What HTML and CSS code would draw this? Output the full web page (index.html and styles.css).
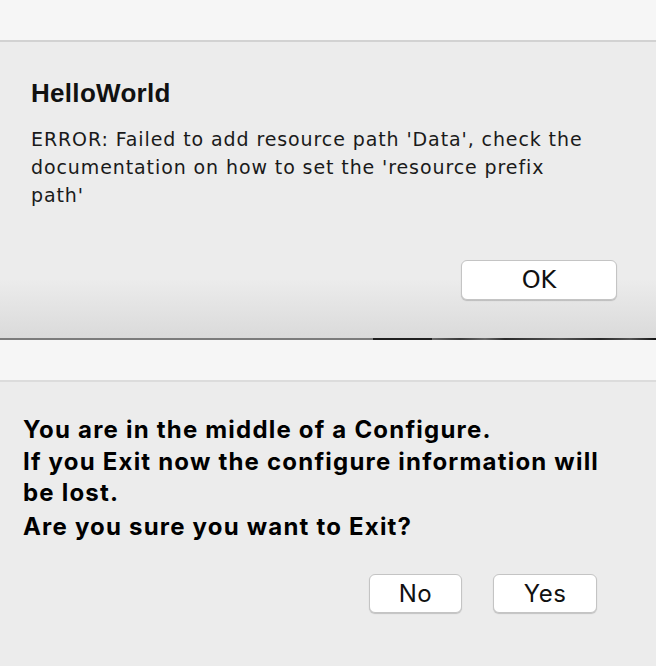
FILE: index.html
```html
<!DOCTYPE html>
<html>
<head>
<meta charset="utf-8">
<link rel="stylesheet" href="styles.css">
</head>
<body>
<section class="dialog dialog-error">
  <div class="titlebar"></div>
  <div class="dialog-body error-body">
    <h1 class="title">HelloWorld</h1>
    <p class="message">ERROR: Failed to add resource path 'Data', check the<br>documentation on how to set the 'resource prefix<br>path'</p>
    <div class="actions actions-ok">
      <button class="btn btn-ok">OK</button>
    </div>
  </div>
</section>
<div class="divider"></div>
<section class="dialog dialog-confirm">
  <div class="titlebar"></div>
  <div class="dialog-body confirm-body">
    <p class="question">You are in the middle of a Configure.<br>If you Exit now the configure information will<br>be lost.</p>
    <p class="question question-last">Are you sure you want to Exit?</p>
    <div class="actions actions-yn">
      <button class="btn btn-no">No</button>
      <button class="btn btn-yes">Yes</button>
    </div>
  </div>
</section>
</body>
</html>
```
FILE: styles.css
```css
* { box-sizing: border-box; }
html, body {
  margin: 0;
  padding: 0;
  width: 656px;
  height: 666px;
  overflow: hidden;
  background: #ececec;
}
.dialog { width: 656px; }
.titlebar {
  height: 42px;
  background: #f6f6f6;
  border-bottom: 2px solid #d2d2d2;
}
.dialog-confirm .titlebar {
  border-bottom-color: #dcdcdc;
}
.error-body {
  height: 296px;
  padding: 36px 39px 0 31px;
  background: linear-gradient(to bottom, #ececec 0%, #ececec 80%, #dadada 100%);
}
.title {
  margin: 0;
  font-family: "Liberation Sans", Arial, sans-serif;
  font-weight: 700;
  font-size: 26px;
  line-height: 30px;
  letter-spacing: 0.3px;
  color: #111;
}
.message {
  margin: 17px 0 0;
  font-family: "DejaVu Sans", sans-serif;
  font-size: 19px;
  line-height: 28px;
  letter-spacing: 0.9px;
  white-space: nowrap;
  color: #1a1a1a;
}
.actions {
  display: flex;
  justify-content: flex-end;
}
.actions-ok { margin-top: 51px; }
.btn {
  background: #fff;
  border: 1px solid #c4c4c4;
  border-radius: 6px;
  box-shadow: 0 1px 1px rgba(0,0,0,0.18);
  color: #111;
  padding: 0;
  height: 40px;
}
.btn-ok {
  width: 156px;
  font-family: "DejaVu Sans", sans-serif;
  font-size: 24px;
}
.divider {
  height: 2px;
  background: linear-gradient(to right, #7c7c7c 0, #7c7c7c 373px, #1f1f1f 373px, #1f1f1f 432px, #6a6a6a 432px, #3a3a3a 460px, #6a6a6a 485px, #2a2a2a 505px, #555 560px, #2a2a2a 600px, #555 630px, #111 656px);
}
.confirm-body {
  padding: 32px 59px 0 23px;
}
.question {
  margin: 0;
  font-family: Inter, "Liberation Sans", sans-serif;
  font-weight: 700;
  font-size: 24px;
  line-height: 31.5px;
  letter-spacing: 1.2px;
  white-space: nowrap;
  color: #000;
}
.question-last { margin-top: 2px; }
.actions-yn {
  margin-top: 32px;
  gap: 31px;
}
.btn-no, .btn-yes {
  height: 39px;
  font-family: Inter, sans-serif;
  font-size: 24px;
  letter-spacing: 0.5px;
}
.btn-no { width: 93px; }
.btn-yes { width: 104px; }
```
